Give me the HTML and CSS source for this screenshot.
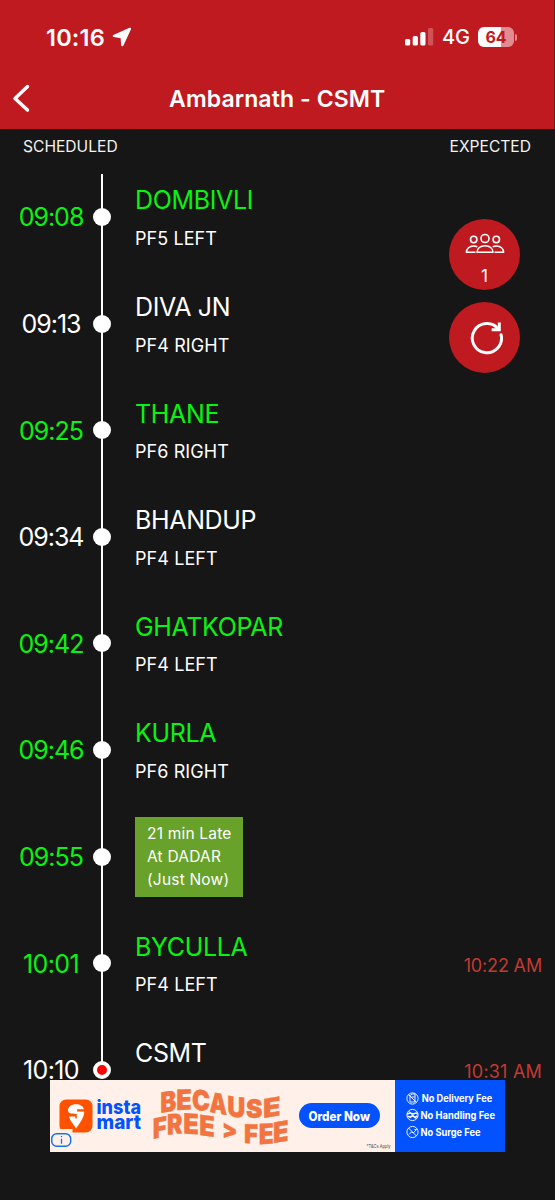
FILE: index.html
```html
<!DOCTYPE html>
<html lang="en">
<head>
<meta charset="utf-8">
<title>Ambarnath - CSMT</title>
<link rel="stylesheet" href="styles.css">
</head>
<body>
<div class="screen">
  <header class="header">
    <div class="status">
      <div class="status-left">
        <span class="clock">10:16</span>
        <svg class="loc" width="20" height="20" viewBox="0 0 20 20"><path d="M18 1.800 1.800 8.900l7.800 1.300.7 8z" fill="#fff" stroke="#fff" stroke-width="2.200" stroke-linejoin="round"/></svg>
      </div>
      <div class="status-right">
        <svg class="signal" width="29" height="18" viewBox="0 0 29 18" fill="#fff"><rect x="0" y="11" width="5.200" height="6.500" rx="1.500"/><rect x="7.700" y="8" width="5.200" height="9.500" rx="1.500"/><rect x="15.300" y="4" width="5.200" height="13.500" rx="1.500"/><rect x="23" y="0" width="5.200" height="17.500" rx="1.500" opacity=".25"/></svg>
        <span class="network">4G</span>
        <span class="battery"><span class="battery-text">64</span></span>
        <span class="battery-cap"></span>
      </div>
    </div>
    <div class="nav">
      <svg class="back" width="20" height="30" viewBox="0 0 20 30"><path d="M16.500 2.500 4 14.500l12.500 11.500" fill="none" stroke="#fff" stroke-width="3.500" stroke-linecap="round" stroke-linejoin="round"/></svg>
      <h1 class="title">Ambarnath - CSMT</h1>
    </div>
  </header>
  <div class="columns"><span>SCHEDULED</span><span>EXPECTED</span></div>
  <main class="stops">
    <div class="stop on"><span class="time">09:08</span><i class="dot"></i><div class="info"><p class="name">DOMBIVLI</p><p class="pf">PF5 LEFT</p></div></div>
    <div class="stop"><span class="time">09:13</span><i class="dot"></i><div class="info"><p class="name">DIVA JN</p><p class="pf">PF4 RIGHT</p></div></div>
    <div class="stop on"><span class="time">09:25</span><i class="dot"></i><div class="info"><p class="name">THANE</p><p class="pf">PF6 RIGHT</p></div></div>
    <div class="stop"><span class="time">09:34</span><i class="dot"></i><div class="info"><p class="name">BHANDUP</p><p class="pf">PF4 LEFT</p></div></div>
    <div class="stop on"><span class="time">09:42</span><i class="dot"></i><div class="info"><p class="name">GHATKOPAR</p><p class="pf">PF4 LEFT</p></div></div>
    <div class="stop on"><span class="time">09:46</span><i class="dot"></i><div class="info"><p class="name">KURLA</p><p class="pf">PF6 RIGHT</p></div></div>
    <div class="stop on"><span class="time">09:55</span><i class="dot"></i><div class="late">21 min Late<br>At DADAR<br>(Just Now)</div></div>
    <div class="stop on"><span class="time wide">10:01</span><i class="dot"></i><div class="info"><p class="name">BYCULLA</p><p class="pf">PF4 LEFT</p></div><span class="eta">10:22 AM</span></div>
    <div class="stop last"><span class="time wide">10:10</span><i class="dot current"></i><div class="info"><p class="name">CSMT</p></div><span class="eta late-eta">10:31 AM</span></div>
  </main>
  <div class="actions">
    <div class="action crowd">
      <svg width="40" height="22" viewBox="0 0 40 22" fill="none" stroke="#fff" stroke-width="1.600"><circle cx="20" cy="5.500" r="4"/><path d="M12 19.300c0-4 3.500-6.600 8-6.600s8 2.600 8 6.600z" stroke-linejoin="round"/><circle cx="8.700" cy="6.500" r="3.200"/><circle cx="31.300" cy="6.500" r="3.200"/><path d="M10.500 19.300H1.500c0-3.700 3-6.300 7-6.300 1.500 0 2.700.3 3.800.9M29.500 19.300h9c0-3.700-3-6.300-7-6.300-1.500 0-2.700.3-3.800.9"/></svg>
      <span class="count">1</span>
    </div>
    <div class="action">
      <svg width="36" height="36" viewBox="0 0 36 36" fill="none" stroke="#fff" stroke-width="3"><path d="M34.100 14.800A14.600 14.600 0 1 1 31.500 9.300" stroke-linecap="round"/><path d="M32.300 2.500v7.200h-7.600" stroke-linejoin="miter"/></svg>
    </div>
  </div>
  <div class="ad">
    <svg width="455" height="72" viewBox="0 0 455 72">
      <rect width="455" height="72" fill="#fff1e9"/>
      <rect x="345" width="110" height="72" fill="#0352ff"/>
      <rect x="9.500" y="19.500" width="33" height="33" rx="6.500" fill="#ff5200"/>
      <path d="M26 48.500c-.8-2.500-6.500-8-7-12h6.300v2h1.500v-4.500c-2.300-.3-8.800.4-8.800-3.500 0-3.800 3.300-6.300 8-6.300 4.200 0 7.300 2 7.900 5H27v2.300h7.200c.5 5.500-5 12.500-8.200 17z" fill="#fff"/>
      <path d="M0 49h22.500v6H0z" fill="#fff1e9"/>
      <rect x="1.700" y="53.700" width="19" height="12.500" rx="5" fill="#fff1e9" stroke="#1673e6" stroke-width="1.500"/>
      <path d="M11.500 58.700v5M11.500 56v1.300" stroke="#1673e6" stroke-width="1.300"/>
      <g class="brand"><text x="46.500" y="34" textLength="44.500" lengthAdjust="spacingAndGlyphs">insta</text><text x="46.500" y="49" textLength="44.500" lengthAdjust="spacingAndGlyphs">mart</text></g>
      <g class="slogan">
        <text transform="translate(110.300 33) skewY(-9)" textLength="16" lengthAdjust="spacingAndGlyphs">B</text>
        <text transform="translate(126.300 30) skewY(-2)" textLength="15.500" lengthAdjust="spacingAndGlyphs">E</text>
        <text transform="translate(142 29.500) skewY(6)" textLength="18" lengthAdjust="spacingAndGlyphs">C</text>
        <text transform="translate(159.500 32) skewY(10)" textLength="17.500" lengthAdjust="spacingAndGlyphs">A</text>
        <text transform="translate(177.300 36) skewY(7)" textLength="18" lengthAdjust="spacingAndGlyphs">U</text>
        <text class="low" transform="translate(196 38.300) skewY(0)" textLength="16.500" lengthAdjust="spacingAndGlyphs">S</text>
        <text class="low" transform="translate(213 38) skewY(-9)" textLength="17.500" lengthAdjust="spacingAndGlyphs">E</text>
        <text transform="translate(102.800 59) skewY(-11)" textLength="14" lengthAdjust="spacingAndGlyphs">F</text>
        <text transform="translate(117 54.700) skewY(-5)" textLength="15.500" lengthAdjust="spacingAndGlyphs">R</text>
        <text transform="translate(133.300 53.500) skewY(3)" textLength="15.500" lengthAdjust="spacingAndGlyphs">E</text>
        <text transform="translate(149.300 55) skewY(7)" textLength="15.500" lengthAdjust="spacingAndGlyphs">E</text>
        <text class="gt" transform="translate(172 57.500) skewY(7)" textLength="15.500" lengthAdjust="spacingAndGlyphs">&gt;</text>
        <text class="low" transform="translate(194 63) skewY(2)" textLength="14" lengthAdjust="spacingAndGlyphs">F</text>
        <text transform="translate(208.800 64.300) skewY(-3)" textLength="15" lengthAdjust="spacingAndGlyphs">E</text>
        <text transform="translate(223 63) skewY(-9)" textLength="15.500" lengthAdjust="spacingAndGlyphs">E</text>
      </g>
      <rect x="249" y="23" width="81" height="25" rx="12.500" fill="#0352ff"/>
      <text class="cta" x="258.500" y="40.700" textLength="61.500" lengthAdjust="spacingAndGlyphs">Order Now</text>
      <text class="terms" x="316.500" y="67.700" textLength="24" lengthAdjust="spacingAndGlyphs">*T&amp;Cs Apply</text>
      <g fill="none" stroke="#fff" stroke-width=".9">
        <circle cx="362.500" cy="18.500" r="5.600"/><path d="M358.500 14.500l8 8M360 22v-6.500l2-1.500h3v8zM361.500 17h3"/>
        <circle cx="362.500" cy="35" r="5.600"/><path d="M357 34l3-1 3 1 3-1 2 1M357.500 36.300l3 .8 2-1.500 2.500 1.800 2.500-1.400" stroke-width="1.500"/><path d="M358.500 31l8 8"/>
        <circle cx="362.500" cy="52" r="5.600"/><path d="M358.500 48l8 8M359 54.500l2.500-2.500 2 .8 3-3.300M364.500 49.500h2"/>
      </g>
      <g class="perk">
        <text x="371.700" y="22.300" textLength="70.500" lengthAdjust="spacingAndGlyphs">No Delivery Fee</text>
        <text x="370.500" y="38.700" textLength="74.500" lengthAdjust="spacingAndGlyphs">No Handling Fee</text>
        <text x="370.500" y="55.800" textLength="60" lengthAdjust="spacingAndGlyphs">No Surge Fee</text>
      </g>
    </svg>
  </div>
</div>
</body>
</html>
```
FILE: styles.css
```css
* { box-sizing: border-box; margin: 0; padding: 0; }
body { background: #161616; font-family: Inter, "Liberation Sans", sans-serif; color: #fff; }
.screen { position: relative; width: 555px; height: 1200px; overflow: hidden; background: #161616; }
.header { height: 129px; background: #c01a21; border-right: 1px solid #7c1519; }
.status { display: flex; justify-content: space-between; height: 74px; padding: 0 37px 0 46px; }
.status-left, .status-right { display: flex; align-items: center; }
.clock { font-size: 23.500px; font-weight: 600; letter-spacing: 0.2px; }
.loc { margin-left: 7px; }
.network { margin-left: 8px; font-size: 20px; font-weight: 500; }
.battery { display: flex; align-items: center; justify-content: center; width: 36px; height: 20px; margin-left: 8px; border-radius: 6px; background: linear-gradient(90deg, #fff 64%, #e08c90 64%); }
.battery-text { font-size: 16px; font-weight: 700; color: #c01a21; }
.battery-cap { width: 2px; height: 7px; margin-left: 1px; border-radius: 0 2px 2px 0; background: #e08c90; }
.nav { display: flex; align-items: center; height: 49px; padding-left: 10.500px; }
.title { flex: 1; margin-right: 30px; text-align: center; font-size: 23px; font-weight: 600; letter-spacing: 0.1px; }
.columns { display: flex; justify-content: space-between; height: 45px; padding: 7.500px 24px 0 23px; font-size: 15.600px; line-height: 20px; color: #f2f2f2; }
.stop { position: relative; display: flex; align-items: flex-start; height: 106.600px; }
.stop::before { content: ""; position: absolute; left: 101px; top: 0; width: 2px; height: 107px; background: #fff; }
.stop.last::before { height: 43px; }
.time { width: 102px; padding-top: 28.400px; text-align: center; font-size: 25px; line-height: 30px; letter-spacing: -1px; }
.time.wide { letter-spacing: -0.600px; }
.on .time, .on .name { color: #08f312; }
.dot { position: relative; width: 18px; height: 18px; margin: 34px 24px 0 -9px; border-radius: 50%; background: #fff; }
.current { border: 4px solid #fff; background: #f00; }
.info { flex: 1; padding-top: 11.400px; }
.name { font-size: 25px; line-height: 30px; letter-spacing: -0.350px; }
.pf { margin-top: 12.600px; font-size: 18px; line-height: 22px; letter-spacing: 0.080px; }
.late { width: 108px; height: 80px; margin-top: 3px; padding: 5.300px 0 0 12px; background: #68a22a; font-size: 15.500px; line-height: 23.300px; letter-spacing: 0.2px; white-space: nowrap; }
.eta { padding: 35px 13px 0 0; font-size: 18px; line-height: 22px; letter-spacing: -0.150px; color: #c23a32; }
.late-eta { padding-top: 34.500px; letter-spacing: 0.200px; }
.actions { position: absolute; left: 449px; top: 219px; display: flex; flex-direction: column; gap: 12px; }
.action { display: flex; flex-direction: column; align-items: center; justify-content: center; width: 71px; height: 71px; border-radius: 50%; background: #c01a21; }
.crowd { justify-content: flex-start; padding-top: 14px; }
.count { margin-top: 10px; font-size: 17px; line-height: 22px; }
.ad { position: absolute; left: 50px; top: 1080px; width: 455px; height: 72px; }
.ad svg { display: block; }
.brand { font-size: 19px; font-weight: 800; fill: #0352ff; }
.slogan { font-size: 28px; font-weight: 900; fill: #f27440; stroke: #f27440; stroke-width: 0.4px; }
.slogan .low { font-size: 26px; }
.slogan .gt { font-size: 25px; }
.cta { font-size: 12.500px; font-weight: 800; fill: #fff; }
.terms { font-size: 4.500px; fill: #444; }
.perk { font-size: 9.700px; font-weight: 700; fill: #fff; }
```
